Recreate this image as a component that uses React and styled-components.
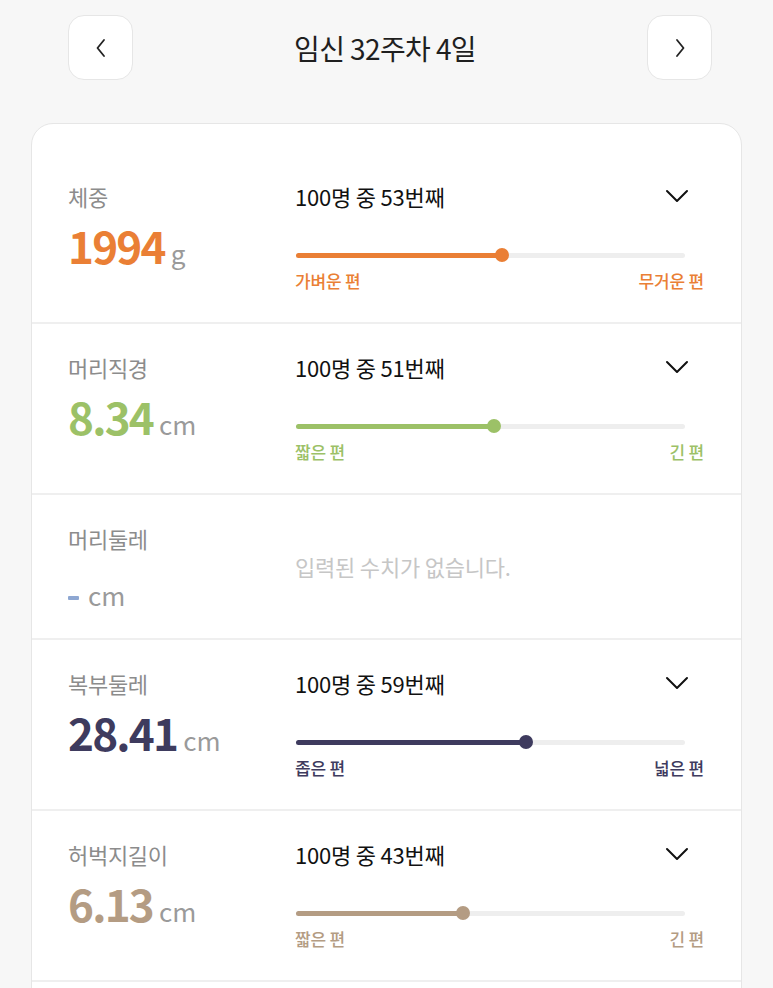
import React from "react";
import styled, { createGlobalStyle } from "styled-components";

const GlobalStyle = createGlobalStyle`
  html, body { margin: 0; padding: 0; background: #f7f7f7; }
  body { font-family: "Noto Sans CJK KR", "Noto Sans", sans-serif; color: #222; }
  * { box-sizing: border-box; }
`;

const Page = styled.div`
  width: 773px;
  padding: 15px 31px 0 31px;
`;

const Header = styled.header`
  display: flex;
  align-items: center;
  justify-content: space-between;
  padding: 0 30px 0 37px;
  height: 65px;
`;

const NavButton = styled.button`
  width: 65px;
  height: 65px;
  border-radius: 16px;
  border: 1px solid #e6e6e6;
  background: #fff;
  display: flex;
  align-items: center;
  justify-content: center;
  padding: 0;
  color: #222;
`;

const Title = styled.h1`
  margin: 0 10px 0 0;
  font-size: 28px;
  font-weight: 400;
  letter-spacing: -0.6px;
  color: #1f1f1f;
  line-height: 36px;
`;

const Card = styled.section`
  margin-top: 43px;
  background: #fff;
  border: 1px solid #e6e6e6;
  border-radius: 22px;
  padding-top: 29px;
  padding-bottom: 60px;
`;

const Row = styled.div`
  display: grid;
  grid-template-columns: 227px 1fr;
  padding: 28px 37px ${(p) => (p.$empty ? 18 : 19)}px 36px;
  border-bottom: 2px solid #efefef;
`;

const Left = styled.div`
  display: flex;
  flex-direction: column;
`;

const Label = styled.div`
  font-size: 22px;
  line-height: 30px;
  color: #8c8c8c;
  letter-spacing: -0.3px;
`;

const ValueLine = styled.div`
  margin-top: ${(p) => (p.$empty ? 23 : 12)}px;
  display: flex;
  align-items: baseline;
  height: 44px;
`;

const Value = styled.span`
  font-size: 44px;
  line-height: 44px;
  font-weight: 700;
  letter-spacing: -1.8px;
  color: ${(p) => p.$color};
`;

const Dash = styled.span`
  display: inline-block;
  width: 11px;
  height: 4px;
  border-radius: 1px;
  background: #8ea7d2;
  align-self: center;
`;

const Unit = styled.span`
  font-size: 26px;
  color: #9a9a9a;
  margin-left: ${(p) => (p.$afterDash ? 9 : 6)}px;
  font-weight: 400;
`;

const Right = styled.div`
  display: flex;
  flex-direction: column;
  padding-bottom: 10px;
`;

const RankLine = styled.div`
  display: flex;
  align-items: center;
  justify-content: space-between;
  height: 30px;
  padding-right: 15px;
`;

const Rank = styled.div`
  font-size: 22px;
  line-height: 30px;
  color: #111;
  letter-spacing: -0.2px;
`;

const Track = styled.div`
  position: relative;
  margin: 37px 19px 0 1px;
  height: 14px;
  display: flex;
  align-items: center;
  &::before {
    content: "";
    position: absolute;
    left: 0;
    right: 0;
    height: 5px;
    border-radius: 3px;
    background: #eeeeee;
  }
`;

const Fill = styled.div`
  position: relative;
  height: 5px;
  border-radius: 3px;
  background: ${(p) => p.$color};
`;

const Knob = styled.div`
  position: absolute;
  top: 50%;
  width: 14px;
  height: 14px;
  margin: -7px 0 0 -7px;
  border-radius: 50%;
  background: ${(p) => p.$color};
`;

const Ends = styled.div`
  margin-top: 7px;
  display: flex;
  justify-content: space-between;
  font-size: 17px;
  line-height: 24px;
  font-weight: 500;
  letter-spacing: -0.2px;
  color: ${(p) => p.$color};
`;

const Empty = styled.div`
  margin-top: 28px;
  font-size: 22px;
  line-height: 30px;
  color: #c6c6c6;
  letter-spacing: -0.2px;
`;

const ChevronLeft = () => (
  <svg width="14" height="22" viewBox="0 0 14 22" fill="none">
    <path d="M10 3 L3.5 11 L10 19" stroke="#222" strokeWidth="1.8" strokeLinecap="round" strokeLinejoin="round" />
  </svg>
);
const ChevronRight = () => (
  <svg width="14" height="22" viewBox="0 0 14 22" fill="none">
    <path d="M4 3 L10.5 11 L4 19" stroke="#222" strokeWidth="1.8" strokeLinecap="round" strokeLinejoin="round" />
  </svg>
);
const ChevronDown = () => (
  <svg width="24" height="14" viewBox="0 0 24 14" fill="none">
    <path d="M2 2 L12 12 L22 2" stroke="#111" strokeWidth="2" strokeLinecap="round" strokeLinejoin="round" />
  </svg>
);

const items = [
  { label: "체중", value: "1994", unit: "g", rank: 53, color: "#ea7f35", low: "가벼운 편", high: "무거운 편" },
  { label: "머리직경", value: "8.34", unit: "cm", rank: 51, color: "#9cc167", low: "짧은 편", high: "긴 편" },
  { label: "머리둘레", value: null, unit: "cm" },
  { label: "복부둘레", value: "28.41", unit: "cm", rank: 59, color: "#3e3b5e", low: "좁은 편", high: "넓은 편" },
  { label: "허벅지길이", value: "6.13", unit: "cm", rank: 43, color: "#b49c83", low: "짧은 편", high: "긴 편" },
];

export default function App() {
  return (
    <>
      <GlobalStyle />
      <Page>
        <Header>
          <NavButton aria-label="이전"><ChevronLeft /></NavButton>
          <Title>임신 32주차 4일</Title>
          <NavButton aria-label="다음"><ChevronRight /></NavButton>
        </Header>
        <Card>
          {items.map((it) => (
            <Row key={it.label} $empty={!it.value}>
              <Left>
                <Label>{it.label}</Label>
                <ValueLine $empty={!it.value}>
                  {it.value ? <Value $color={it.color}>{it.value}</Value> : <Dash />}
                  <Unit $afterDash={!it.value}>{it.unit}</Unit>
                </ValueLine>
              </Left>
              {it.value ? (
                <Right>
                  <RankLine>
                    <Rank>100명 중 {it.rank}번째</Rank>
                    <ChevronDown />
                  </RankLine>
                  <Track>
                    <Fill $color={it.color} style={{ width: `${it.rank}%` }}>
                      <Knob $color={it.color} style={{ left: "100%" }} />
                    </Fill>
                  </Track>
                  <Ends $color={it.color}>
                    <span>{it.low}</span>
                    <span>{it.high}</span>
                  </Ends>
                </Right>
              ) : (
                <Empty>입력된 수치가 없습니다.</Empty>
              )}
            </Row>
          ))}
        </Card>
      </Page>
    </>
  );
}
